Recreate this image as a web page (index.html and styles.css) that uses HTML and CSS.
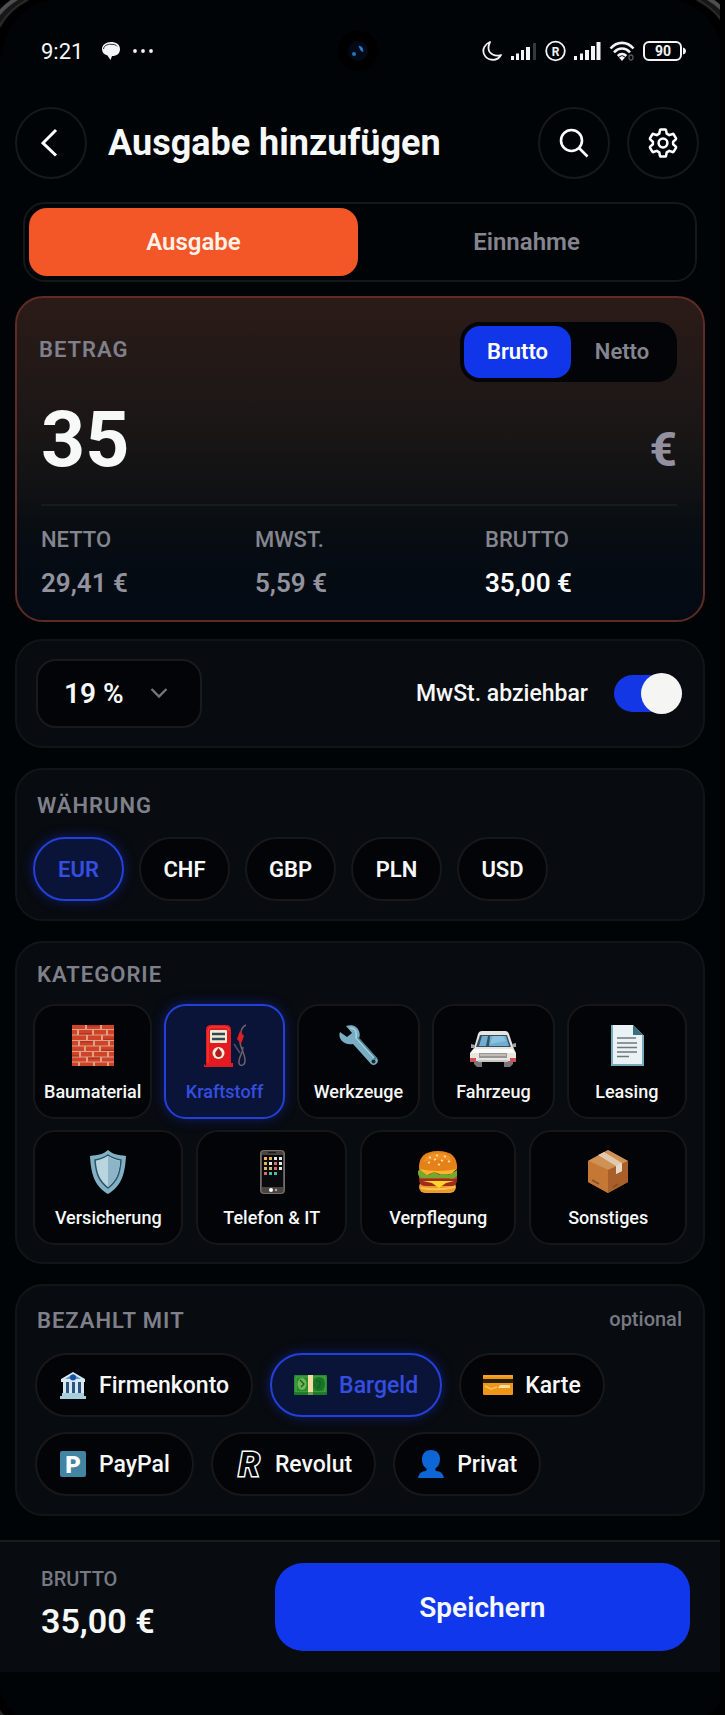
FILE: index.html
```html
<!DOCTYPE html>
<html lang="de">
<head>
<meta charset="utf-8">
<meta name="viewport" content="width=device-width, initial-scale=1">
<title>Ausgabe hinzufügen</title>
<link rel="stylesheet" href="styles.css">
</head>
<body>
<div class="phone">
  <!-- Device status bar -->
  <div class="status">
    <div class="status-left">
      <span class="clock">9:21</span>
      <svg width="20" height="20" viewBox="0 0 20 20" aria-hidden="true"><path d="M10 1C5 1 1 4 1 8c0 3.500 2 5.500 5.500 6.500L9.500 19l1.500-4c5 0 8-2.500 8-7s-4-7-9-7z" fill="#f2f4f5"/><path d="M2.500 8C3 4.500 6 3.300 10 3.300c3 0 5 .5 6 2" fill="none" stroke="#30363a" stroke-width="1"/></svg>
      <svg width="22" height="6" viewBox="0 0 22 6" fill="#f2f4f5" aria-hidden="true"><circle cx="3" cy="3" r="1.900"/><circle cx="11" cy="3" r="1.900"/><circle cx="19" cy="3" r="1.900"/></svg>
    </div>
    <svg class="camera" width="40" height="44" viewBox="0 0 40 44" aria-hidden="true"><circle cx="20" cy="22" r="20" fill="#000"/><circle cx="20" cy="22" r="10" fill="#020a18"/><circle cx="16" cy="25" r="2" fill="#1e78b8"/><path d="M21 17l3 1.500 1 4-2-1z" fill="#2d8fd8" stroke="#2372c0" stroke-width="1"/></svg>
    <div class="status-right">
      <svg width="20" height="22" viewBox="0 0 20 22" aria-hidden="true"><path d="M8 2C3 4 0 9 2 14c3 7 13 8 17 1-6 2-12-1-12.500-6.500C6.300 6 7 4 8 2z" fill="none" stroke="#f2f4f5" stroke-width="1.800" stroke-linejoin="round"/></svg>
      <svg width="27" height="20" viewBox="0 0 27 20" fill="#f2f4f5" aria-hidden="true"><path d="M1 15h3v4H1zM6 12.500h3V19H6zM11 9h3v10h-3zM16 6h4v13h-4z"/><path d="M23 2h3v17h-3z" fill="#34393d"/></svg>
      <svg width="21" height="22" viewBox="0 0 21 22" aria-hidden="true"><circle cx="10.500" cy="11" r="9.300" fill="none" stroke="#f2f4f5" stroke-width="1.800"/><text x="10.500" y="15.500" text-anchor="middle" font-size="12" font-weight="700" fill="#f2f4f5">R</text></svg>
      <svg width="27" height="20" viewBox="0 0 27 20" fill="#f2f4f5" aria-hidden="true"><path d="M0 15h3v4H0zM6 12.500h3V19H6zM11 9h4v10h-4zM17 5h4v14h-4zM22.500 1h4v18h-4z"/></svg>
      <svg width="26" height="22" viewBox="0 0 26 22" fill="none" stroke="#f2f4f5" stroke-width="2.600" aria-hidden="true"><path d="M1.500 8.500c6.500-7.500 16.500-7.500 23 0M5 12.300c4.800-5 11.200-5 16 0M8.800 16c2.500-2.600 6-2.600 8.500 0"/><path d="M10 17.500l3-1.500 3 1.500-3 3.500z" fill="#f2f4f5" stroke="none"/><ellipse cx="22" cy="17.500" rx="2" ry="2.500" stroke="#51575b" stroke-width="1.300"/></svg>
      <svg width="44" height="20" viewBox="0 0 44 20" aria-hidden="true"><rect x="1" y="1" width="37" height="18" rx="5" fill="none" stroke="#f2f4f5" stroke-width="2"/><path d="M40 6.500c4 1 4 6 0 7z" fill="#f2f4f5"/><text x="20" y="15" text-anchor="middle" font-size="14" font-weight="700" fill="#f2f4f5">90</text></svg>
    </div>
  </div>

  <header class="header">
    <button class="round" type="button" aria-label="Zurück"><svg width="20" height="30" viewBox="0 0 20 30"><path d="M15 2L2 15l13 12.500" fill="none" stroke="#fff" stroke-width="3"/></svg></button>
    <h1 class="title">Ausgabe hinzufügen</h1>
    <button class="round" type="button" aria-label="Suchen"><svg width="30" height="30" viewBox="0 0 30 30" fill="none" stroke="#fff" stroke-width="2.600"><circle cx="12.500" cy="12.500" r="10.500"/><path d="M20 20l8.500 8.500"/></svg></button>
    <button class="round" type="button" aria-label="Einstellungen"><svg width="32" height="32" viewBox="0 0 24 24" fill="none" stroke="#fff" stroke-width="1.900" stroke-linejoin="round"><circle cx="12" cy="12" r="3.300"/><path d="M10.300 1.800h3.400q.5 0 .6.600l.5 2.600 1.900 1.100 2.500-.9q.5-.2.800.3l1.700 2.900q.3.500-.1.900L19.600 11v2l2 1.700q.4.400.1.900L20 18.500q-.3.500-.8.300l-2.500-.9-1.900 1.100-.5 2.600q-.1.600-.6.600h-3.400q-.5 0-.6-.6L9.200 19l-1.900-1.100-2.500.9q-.5.200-.8-.3l-1.700-2.900q-.3-.5.100-.9l2-1.700v-2l-2-1.700q-.4-.4-.1-.9L4 5.500q.3-.5.800-.3l2.500.9L9.200 5l.5-2.600q.1-.6.600-.6z"/></svg></button>
  </header>

  <main class="content">
    <div class="tabs" role="tablist" aria-label="Buchungsart">
      <button class="tab tab-active" type="button" role="tab" aria-selected="true">Ausgabe</button>
      <button class="tab" type="button" role="tab" aria-selected="false">Einnahme</button>
    </div>

    <section class="card amount">
      <div class="amount-head">
        <label class="caption" for="betrag">BETRAG</label>
        <div class="segment" role="group" aria-label="Betragsart">
          <button class="seg seg-active" type="button" aria-pressed="true">Brutto</button>
          <button class="seg" type="button" aria-pressed="false">Netto</button>
        </div>
      </div>
      <div class="amount-row">
        <input class="amount-input" id="betrag" type="text" inputmode="decimal" value="35">
        <span class="euro">€</span>
      </div>
      <dl class="split">
        <div><dt>NETTO</dt><dd>29,41 €</dd></div>
        <div><dt>MWST.</dt><dd>5,59 €</dd></div>
        <div><dt>BRUTTO</dt><dd class="strong">35,00 €</dd></div>
      </dl>
    </section>

    <section class="card vat">
      <div class="select-wrap">
        <select class="select" aria-label="Steuersatz"><option>19 %</option><option>7 %</option><option>0 %</option></select>
        <svg class="select-arrow" width="18" height="12" viewBox="0 0 18 12" aria-hidden="true"><path d="M1.500 2L9 9.500 16.500 2" fill="none" stroke="#74747c" stroke-width="2.400"/></svg>
      </div>
      <label class="switch-label" for="abziehbar">MwSt. abziehbar</label>
      <input class="switch" id="abziehbar" type="checkbox" role="switch" checked>
    </section>

    <section class="card currency">
      <h2 class="caption">WÄHRUNG</h2>
      <div class="chips">
        <button class="chip chip-active" type="button" aria-pressed="true">EUR</button>
        <button class="chip" type="button">CHF</button>
        <button class="chip" type="button">GBP</button>
        <button class="chip" type="button">PLN</button>
        <button class="chip" type="button">USD</button>
      </div>
    </section>

    <section class="card category">
      <h2 class="caption">KATEGORIE</h2>
      <div class="tiles tiles-five">
        <button class="tile" type="button">
          <svg viewBox="0 0 44 44"><rect x="1" y="1" width="42" height="41" fill="#dda286"/><g fill="#cf4328"><path d="M1 1h13v4H1zM16 1h13v4H16zM31 1h12v4H31zM1 6h5v4.500H1zM8 6h13v4.500H8zM23 6h12v4.500H23zM37 6h6v4.500h-6zM1 11.500h14V16H1zM17 11.500h13V16H17zM32 11.500h11V16H32zM1 17h6v4.500H1zM9 17h13v4.500H9zM24 17h13v4.500H24zM39 17h4v4.500h-4zM1 22.500h12V27H1zM15 22.500h13V27H15zM30 22.500h13V27H30zM1 28h7v4.500H1zM10 28h11v4.500H10zM23 28h13v4.500H23zM38 28h5v4.500h-5zM1 33.500h14v4H1zM17 33.500h12v4H17zM31 33.500h12v4H31zM1 38.500h6V42H1zM9 38.500h13V42H9zM24 38.500h12V42H24zM38 38.500h5V42h-5z"/></g><g fill="#b63220"><path d="M16 1h13v1.500H16zM8 9h13v1.500H8zM32 14.500h11V16H32zM9 17h13v1.500H9zM30 25.500h13V27H30zM1 31h7v1.500H1zM17 33.500h12V35H17z"/></g></svg>
          <span>Baumaterial</span>
        </button>
        <button class="tile tile-active" type="button" aria-pressed="true">
          <svg viewBox="0 0 44 44"><path d="M3 42V6q0-5 5-5h15q5 0 5 5v33h2v4H1v-3z" fill="#e31b20"/><path d="M5 39V7q0-4 4-4h13q4 0 4 4" fill="none" stroke="#f3483c" stroke-width="1"/><rect x="7" y="6" width="17" height="13" rx="1" fill="#f6ecd2"/><path d="M9 10h13M9 15h13" stroke="#30475a" stroke-width="2.500"/><circle cx="15.500" cy="29" r="6" fill="#f7efd9"/><path d="M15.500 24l3 4c1 4-1 5-3 5s-4-2-3-5z" fill="#ae1a1d"/><path d="M43 1c-4 2-5 4-5 8M37 18c0 5 5 12 5 18 0 7-7 7-6 1 0-4 4-8 4-14" fill="none" stroke="#6d6069" stroke-width="1.500"/><path d="M37 7l4 5-3 8-4-5z" fill="#dc2028"/><path d="M31 20l6 9" stroke="#594d61" stroke-width="1.500"/></svg>
          <span>Kraftstoff</span>
        </button>
        <button class="tile" type="button">
          <svg viewBox="0 0 44 44"><path d="M10 2c5-2 11-.5 13 5 1 3 1 5 0 7l18 20c3 4-2 9-6 6L17 20C9 22 1 15 4 8l7 5 5-4z" fill="#79adc2"/><path d="M21 14l19 21" stroke="#4b8298" stroke-width="3"/><path d="M14 4c6 0 7 5 6 10l18 20" fill="none" stroke="#a9d1de" stroke-width="1.500"/><circle cx="37.500" cy="37.500" r="2" fill="#102a36"/></svg>
          <span>Werkzeuge</span>
        </button>
        <button class="tile" type="button">
          <svg class="wide" viewBox="0 0 48 44"><path d="M5 34h8v9H8l-3-3zM35 34h9v6l-3 3h-6z" fill="#7b7375"/><path d="M9 10q1-3 4-3h23q3 0 4 3l5 15 2 4v8H1v-8l4-5z" fill="#e7e5e2"/><path d="M11 11h27l4 12H7z" fill="#384e60"/><path d="M13 12h6l-2 10h-7zM21 12h16l3 10H20z" fill="#6faed0"/><path d="M24 12h10l3 5-16 3z" fill="#8bc2dc"/><path d="M5 25h38l3 4H2z" fill="#fbfaf7"/><path d="M10 29h28v5H10z" fill="#9b9694"/><path d="M11 31h26" stroke="#e7e2df"/><path d="M1 34h6v4H1zM41 34h6v4h-6z" fill="#d15358"/><path d="M2 30h7v3H2zM39 30h7v3h-7z" fill="#ede5d4"/><path d="M9 36h30v2H9z" fill="#c9c7c4"/><path d="M2 20l4 1v3H2zM43 20l4-1v4h-3z" fill="#a49fa0"/></svg>
          <span>Fahrzeug</span>
        </button>
        <button class="tile" type="button">
          <svg viewBox="0 0 44 44"><path d="M6 1h22l10 10v31H6z" fill="#eaf2f6"/><path d="M28 1l10 10H28z" fill="#36717f"/><path d="M7 1v40h31V11" fill="none" stroke="#74aebb" stroke-width="2"/><path d="M12 14h19M12 19h20M12 23.500h20M12 28h20M12 32.500h12" stroke="#71777d" stroke-width="1.500"/></svg>
          <span>Leasing</span>
        </button>
      </div>
      <div class="tiles tiles-four">
        <button class="tile" type="button">
          <svg viewBox="0 0 44 44"><path d="M22 0c4 4 10 5 18 6-1 17-4 30-18 38C8 36 5 23 4 6c8-1 14-2 18-6z" fill="#81b1c5"/><path d="M22 5c4 3 8 4 13 5-1 14-4 21-13 28C13 31 10 24 9 10c5-1 9-2 13-5z" fill="#b9d5df" stroke="#2e5365" stroke-width="1.500"/><path d="M22 6v31c8-6 11-14 12-26-5-1-9-2-12-5z" fill="#8eb5c7"/></svg>
          <span>Versicherung</span>
        </button>
        <button class="tile" type="button">
          <svg viewBox="0 0 44 44"><rect x="10" y="0" width="25" height="44" rx="4" fill="#756d68"/><rect x="11.500" y="1" width="22" height="42" rx="3" fill="#494440"/><rect x="12" y="5" width="21" height="32" fill="#080a0d"/><path d="M18 2.500h8" stroke="#1c1a1a" stroke-width="1.500"/><path d="M14 7h3v3h-3zM19 7h3v3h-3zM14 12h3v3h-3z" fill="#eab34b"/><path d="M24 7h3v3h-3zM29 7h3v3h-3zM19 12h3v3h-3zM29 12h3v3h-3zM29 17h3v3h-3z" fill="#e6e9e9"/><path d="M24 12h3v3h-3zM24 17h3v3h-3zM14 22h3v3h-3z" fill="#de6b68"/><path d="M14 17h3v3h-3zM19 17h3v3h-3z" fill="#dbb970"/><path d="M19 22h3v3h-3zM24 22h3v3h-3z" fill="#4bbda6"/><circle cx="21" cy="40" r="2" fill="#fff"/><circle cx="26" cy="40" r="1.200" fill="#aaa"/></svg>
          <span>Telefon &amp; IT</span>
        </button>
        <button class="tile" type="button">
          <svg viewBox="0 0 44 44"><rect x="3" y="31" width="37" height="12" rx="6" fill="#e99b2b"/><path d="M3 31q1-5 5-5h28q5 0 5 5-1 6-7 5H10q-6 0-7-5z" fill="#9e2b1b"/><path d="M7 31h31l-8 2-7 5-7-5z" fill="#ffd52b"/><path d="M3 22h38v7H3z" fill="#a95123"/><path d="M2 21q3-4 7 0l4 4 5-3 5 3 5-3 5 3 8-5v6q-4 4-8 2H7q-4 0-5-4z" fill="#72a92f"/><path d="M3 19h38l-6 5H24l-6-2-7 3z" fill="#ffb42b"/><path d="M3 19Q2 1 22 1t19 18q-19 4-38 0z" fill="#e58119"/><path d="M7 12Q10 3 22 3t14 8q-14-4-29 1z" fill="#f08f24"/><path d="M13 7l2 1M20 5l2 1M28 6l2 1M18 10l2-1M25 10l2 1M32 11l2 1M12 13l2-1M22 14l2 1" stroke="#ffe3a5" stroke-width="1.500"/><path d="M5 38q17 3 34-1" fill="none" stroke="#ffc150" stroke-width="2"/></svg>
          <span>Verpflegung</span>
        </button>
        <button class="tile" type="button">
          <svg viewBox="0 0 44 44"><path d="M2 11L22 0l20 11v21L22 43 2 32z" fill="#b96b2d"/><path d="M2 11L22 0l20 11-20 9z" fill="#cf9154"/><path d="M22 20v23L2 32V11z" fill="#c57836"/><path d="M42 11v21L22 43V20z" fill="#a85f29"/><path d="M12 5l6-3 18 11v8l-6 3v-8z" fill="#dfc9b0"/><path d="M30 16l6-3v8l-6 3z" fill="#e9d8c7"/><path d="M6 30l7 4M27 37l5-3" stroke="#855021" stroke-width="1.500"/></svg>
          <span>Sonstiges</span>
        </button>
      </div>
    </section>

    <section class="card payment">
      <div class="payment-head"><h2 class="caption">BEZAHLT MIT</h2><span class="optional">optional</span></div>
      <div class="chips">
        <button class="chip pay" type="button">
          <svg width="28" height="28" viewBox="0 0 28 28"><path d="M14 1l12 7v3H2V8z" fill="#d7eaf4"/><path d="M14 3l8 5H6z" fill="#6596be"/><circle cx="14" cy="6.500" r="3" fill="#174fa8"/><path d="M4 11h20v12H4z" fill="#2c5584"/><path d="M4 11h3v12H4zM10 11h3v12h-3zM16 11h3v12h-3zM22 11h3v12h-3z" fill="#d9e8ef"/><path d="M3 22h22v3H3zM1 25h26v3H1z" fill="#a9cfdd"/></svg>
          Firmenkonto
        </button>
        <button class="chip pay chip-active" type="button" aria-pressed="true">
          <svg width="33" height="28" viewBox="0 0 33 28"><rect x="0" y="4" width="33" height="20" rx="1" fill="#258b2f"/><path d="M2 6h29v15H2z" fill="none" stroke="#52a849"/><ellipse cx="8" cy="13" rx="4.500" ry="6" fill="#70b654"/><ellipse cx="25" cy="13" rx="6" ry="7" fill="#197325"/><path d="M6 9l4 4-3 3M22 10q5-1 4 3t-3 4" fill="none" stroke="#155e24" stroke-width="1.300"/><path d="M14 4h5v20h-5z" fill="#f4dca3"/><path d="M0 21h33v3H0z" fill="#176d26" opacity=".6"/></svg>
          Bargeld
        </button>
        <button class="chip pay" type="button">
          <svg width="30" height="28" viewBox="0 0 30 28"><rect x="0" y="4" width="30" height="20" rx="1" fill="#ef9518"/><path d="M0 8h30v4H0z" fill="#28200f"/><path d="M17 14h10v3H15z" fill="#ffe0a0"/><path d="M2 15l6 3 6-2" fill="none" stroke="#ffc35a" stroke-width="1.500"/><path d="M0 5h30" stroke="#ffb031"/></svg>
          Karte
        </button>
        <button class="chip pay" type="button">
          <svg width="28" height="28" viewBox="0 0 28 28"><rect x="1" y="1" width="26" height="26" rx="2" fill="#4285a2"/><text x="14" y="22.500" text-anchor="middle" font-size="24" font-weight="900" fill="#fff">P</text></svg>
          PayPal
        </button>
        <button class="chip pay" type="button">
          <svg class="revolut" width="28" height="28" viewBox="0 0 28 28"><text x="14" y="26" text-anchor="middle" font-size="34" font-weight="700" font-style="italic" fill="#030609" stroke="#fff" stroke-width="3" paint-order="stroke">R</text></svg>
          Revolut
        </button>
        <button class="chip pay" type="button">
          <svg width="28" height="28" viewBox="0 0 28 28"><path d="M14 0c6 0 9 4 9 9 0 6-3 8-5 10l1 2c5 0 7 3 8 7H1c1-4 3-7 8-7l1-2C7 17 5 14 5 9c0-5 3-9 9-9z" fill="#0c66d5"/></svg>
          Privat
        </button>
      </div>
    </section>
  </main>

  <footer class="footer">
    <div class="total"><span class="total-label">BRUTTO</span><strong class="total-value">35,00 €</strong></div>
    <button class="save" type="button">Speichern</button>
  </footer>

  <!-- Device bezel corners -->
  <svg class="corner corner-tl" viewBox="0 0 60 60" aria-hidden="true"><use href="#bezel"/></svg>
  <svg class="corner corner-tr" viewBox="0 0 60 60" aria-hidden="true"><use href="#bezel"/></svg>
  <svg class="corner corner-bl" viewBox="0 0 60 60" aria-hidden="true"><use href="#bezel"/></svg>
  <svg class="corner corner-br" viewBox="0 0 60 60" aria-hidden="true"><use href="#bezel"/></svg>
  <svg class="defs" width="0" height="0" aria-hidden="true"><defs><g id="bezel" fill="none"><path d="M0 0h50Q8 8 0 60z" fill="#000"/><path d="M-3 26Q5 8 27-3" stroke="#171718" stroke-width="9"/><path d="M-3 16Q5 5 19-3" stroke="#4e4e50" stroke-width="4"/><path d="M-3 31Q6 10 32-3" stroke="#2d2d2f" stroke-width="1.500"/></g></defs></svg>
</div>
</body>
</html>
```
FILE: styles.css
```css
* { box-sizing: border-box; }

body {
  margin: 0;
  background: #000;
  color: #f7f8f8;
  font-family: Roboto, "Open Sans", sans-serif;
  font-size: 22px;
  font-weight: 600;
}

button, input, select { font: inherit; color: inherit; }
button { cursor: pointer; padding: 0; }
h1, h2, dl, dd { margin: 0; }

.phone {
  position: relative;
  min-height: 100vh;
  display: flex;
  flex-direction: column;
  overflow: hidden;
  border-right: 5px solid #000;
  background: #010407;
}

/* Status bar */
.status {
  display: flex;
  align-items: center;
  justify-content: space-between;
  height: 66px;
  margin-top: 18px;
  padding: 0 33px 0 29px;
}
.status-left, .status-right { display: flex; align-items: center; flex: 1; }
.status-left { gap: 11px; }
.clock { font-weight: 400; margin: 0 7px 0 12px; }
.status-right { justify-content: flex-end; gap: 8px; }

/* Header */
.header {
  display: flex;
  align-items: center;
  gap: 17px;
  margin-top: 23px;
  padding: 0 21px 0 15px;
}
.round {
  width: 72px;
  height: 72px;
  flex: none;
  display: grid;
  place-items: center;
  border: 2px solid #15191c;
  border-radius: 50%;
  background: none;
}
.title {
  flex: 1;
  padding-left: 4px;
  font-size: 36px;
  line-height: 44px;
  font-weight: 700;
  white-space: nowrap;
}

/* Content */
.content { padding: 23px 15px 0 15px; }

.tabs {
  display: flex;
  gap: 4px;
  margin: 0 8px;
  height: 80px;
  padding: 4px;
  border: 2px solid #14181b;
  border-radius: 22px;
}
.tab {
  flex: 1;
  border: 0;
  border-radius: 18px;
  background: none;
  color: #85858f;
  font-size: 24px;
}
.tab-active { background: #f35627; color: #fff3e9; }

.card {
  margin-top: 20px;
  border: 2px solid #111519;
  border-radius: 28px;
  background: #080b10;
}
.caption {
  color: #7f808a;
  font-size: 22px;
  line-height: 26px;
  font-weight: 600;
  letter-spacing: 1px;
}

/* Amount */
.amount {
  margin-top: 14px;
  height: 326px;
  padding: 24px 26px 0 24px;
  border: 2px solid #5f2b26;
  background: linear-gradient(#2b1b18, #1b1716 38%, #111214 58%, #080d12 72%, #030a14);
}
.amount-head { display: flex; justify-content: space-between; align-items: center; height: 59px; }
.amount-head .caption { margin: 0 0 4px -2px; }
.segment {
  display: flex;
  height: 60px;
  padding: 4px;
  border-radius: 20px;
  background: #020407;
}
.seg {
  width: 102px;
  border: 0;
  border-radius: 16px;
  background: none;
  color: #85858f;
}
.seg-active { width: 107px; background: #1135e9; color: #fff; }
.amount-row { display: flex; align-items: baseline; margin-top: 9px; height: 114px; }
.amount-input {
  flex: 1;
  min-width: 0;
  height: 100px;
  padding: 0;
  border: 0;
  outline: 0;
  background: none;
  font-size: 77px;
  font-weight: 700;
}
.euro { color: #93919f; font-size: 48px; font-weight: 700; }
.split {
  display: grid;
  grid-template-columns: 214fr 230fr 192fr;
  padding-top: 21px;
  border-top: 2px solid #171b1e;
}
.split dt { color: #85858f; line-height: 26px; font-weight: 500; }
.split dd { margin-top: 12px; color: #93939e; font-size: 26px; line-height: 36px; }
.split .strong { color: #fff; }

/* VAT */
.vat {
  margin-top: 17px;
  display: flex;
  align-items: center;
  height: 109px;
  padding: 0 21px 0 19px;
}
.select-wrap { position: relative; margin-right: auto; }
.select {
  width: 166px;
  height: 69px;
  padding: 0 26px;
  border: 2px solid #171b1e;
  border-radius: 20px;
  background: #020407;
  font-size: 28px;
  appearance: none;
}
.select-arrow { position: absolute; right: 34px; top: 28px; pointer-events: none; }
.switch-label { margin-right: 26px; font-size: 23px; font-weight: 500; }
.switch {
  appearance: none;
  display: flex;
  align-items: center;
  justify-content: flex-end;
  width: 68px;
  height: 37px;
  margin: 0;
  border-radius: 19px;
  background: #1437e6;
}
.switch::before {
  content: "";
  width: 41px;
  height: 41px;
  flex: none;
  border-radius: 50%;
  background: #f5f5f3;
}

/* Currency */
.currency { padding: 23px 16px 18px; }
.currency .caption { padding-left: 4px; }
.chips { display: flex; flex-wrap: wrap; gap: 15px; }
.currency .chips { margin-top: 18px; }
.chip {
  width: 91px;
  height: 64px;
  border: 2px solid #15191c;
  border-radius: 32px;
  background: #020407;
}
.chip-active, .tile-active {
  border-color: #2440d8;
  background: #0a1438;
  color: #344ee0;
  box-shadow: 0 0 12px #101f6d;
}

/* Categories */
.category { padding: 19px 16px 17px; }
.category .caption { padding-left: 4px; }
.tiles { display: grid; margin-top: 16px; }
.tiles-five { grid-template-columns: 119fr 120fr 123fr 122fr 120fr; gap: 12px; }
.tiles-four { grid-template-columns: 150fr 150fr 156fr 157fr; gap: 13px; margin-top: 11px; }
.tile {
  display: flex;
  flex-direction: column;
  align-items: center;
  height: 115px;
  padding-top: 18px;
  border: 2px solid #14181b;
  border-radius: 22px;
  background: #020407;
  font-size: 18px;
  font-weight: 500;
  line-height: 24px;
}
.tile svg { width: 44px; height: 44px; margin-bottom: 12px; }
.tile .wide { width: 48px; }
.tile-active { border-color: #2440d8; background: #0a1438; }

/* Payment */
.payment { padding: 22px 18px 18px; }
.payment-head { display: flex; justify-content: space-between; padding: 0 3px 0 2px; }
.optional { color: #777983; font-size: 20px; line-height: 22px; font-weight: 500; }
.payment .chips { gap: 15px 17px; margin-top: 19px; }
.pay {
  display: flex;
  align-items: center;
  gap: 12px;
  width: auto;
  padding: 0 22px;
  font-size: 23px;
  font-weight: 500;
}
.revolut { overflow: visible; }

/* Footer */
.footer {
  display: flex;
  align-items: center;
  justify-content: space-between;
  height: 132px;
  margin: 24px 0 40px;
  padding: 0 30px 0 41px;
  border-top: 2px solid #171b1e;
  background: #080c10;
}
.total { display: flex; flex-direction: column; }
.total-label { color: #777983; font-size: 20px; line-height: 28px; font-weight: 500; }
.total-value { font-size: 34px; line-height: 56px; font-weight: 600; }
.save {
  width: 64%;
  height: 88px;
  border: 0;
  border-radius: 28px;
  background: #1037eb;
  font-size: 28px;
}

/* Bezel corners lie over the screen */
.corner { position: absolute; width: 60px; height: 60px; pointer-events: none; }
.corner-tl { top: 0; left: 0; }
.corner-tr { top: 0; right: -5px; transform: scaleX(-1); }
.corner-bl { bottom: -14px; left: -6px; transform: scaleY(-1); }
.corner-br { bottom: -14px; right: -11px; transform: scale(-1); }
.defs { position: absolute; }
```
